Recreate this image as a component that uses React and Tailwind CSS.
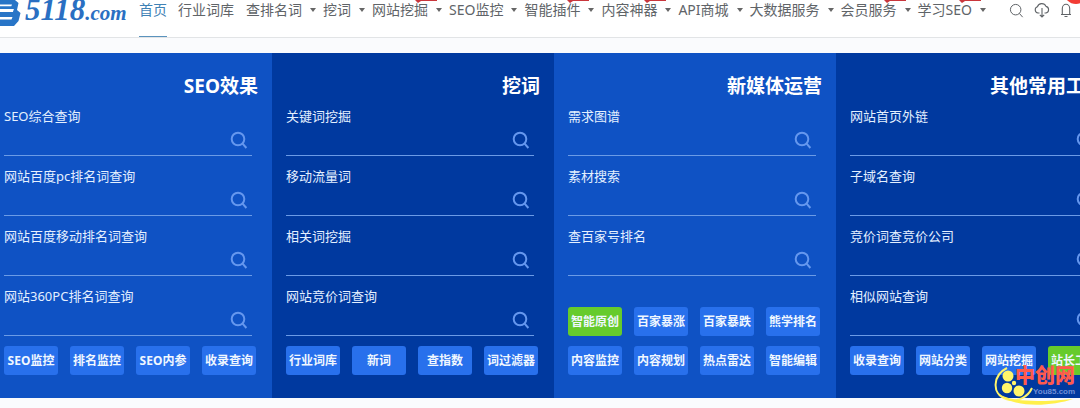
import React from "react";

const nav = [
  { text: "首页", active: true },
  { text: "行业词库" },
  { text: "查排名词", menu: true },
  { text: "挖词", menu: true },
  { text: "网站挖掘", menu: true, hot: true },
  { text: "SEO监控", menu: true },
  { text: "智能插件", menu: true, hot: true },
  { text: "内容神器", menu: true, hot: true },
  { text: "API商城", menu: true },
  { text: "大数据服务", menu: true },
  { text: "会员服务", menu: true, hot: true },
  { text: "学习SEO", menu: true, hot: true },
];

const columns = [
  {
    title: "SEO效果",
    fields: ["SEO综合查询", "网站百度pc排名词查询", "网站百度移动排名词查询", "网站360PC排名词查询"],
    links: ["SEO监控", "排名监控", "SEO内参", "收录查询"],
  },
  {
    title: "挖词",
    fields: ["关键词挖掘", "移动流量词", "相关词挖掘", "网站竞价词查询"],
    links: ["行业词库", "新词", "查指数", "词过滤器"],
  },
  {
    title: "新媒体运营",
    fields: ["需求图谱", "素材搜索", "查百家号排名"],
    links: ["智能原创", "百家暴涨", "百家暴跌", "熊学排名", "内容监控", "内容规划", "热点雷达", "智能编辑"],
    highlight: "智能原创",
  },
  {
    title: "其他常用工具",
    fields: ["网站首页外链", "子域名查询", "竞价词查竞价公司", "相似网站查询"],
    links: ["收录查询", "网站分类", "网站挖掘", "站长工具"],
    highlight: "站长工具",
  },
];

function SearchIcon({ className }) {
  return (
    <svg viewBox="0 0 18 18" fill="none" stroke="currentColor" className={className} aria-hidden="true">
      <circle cx="8" cy="8" r="6.3" />
      <path d="M12.4 12.4 16.4 17" />
    </svg>
  );
}

function Logo() {
  return (
    <a href="#" aria-label="5118.com" className="flex h-7 shrink-0 items-start text-[#2a6fc2]">
      <svg viewBox="0 0 21 28" className="h-7 w-[21px]" aria-hidden="true">
        <path d="M0 0H15L18.5 3 17 10 20.5 13 18.5 21 14 26H0V12H12.5L14 9H0Z" fill="#2875c7" />
        <path d="M0 4.5H12L11.3 6.2H0ZM0 10.4H13.5L12.8 12H0ZM0 17H12.5L11.5 19.4H0Z" fill="#fff" />
      </svg>
      <span className="flex items-baseline font-['Liberation_Serif',serif] font-bold italic">
        <span className="pl-1 text-[31px] leading-5">5118</span>
        <span className="text-[21px] leading-5">.com</span>
      </span>
    </a>
  );
}

function NavItem({ item }) {
  return (
    <li className="relative">
      <a
        href="#"
        className={
          item.active
            ? "mr-[11px] block h-[38px] border-b-2 border-[#5a93bd] text-[#3f82b5]"
            : item.menu
              ? "flex h-[38px] items-start gap-2 pr-[7px]"
              : "mr-3 block h-[38px]"
        }
      >
        {item.text}
        {item.menu && (
          <svg viewBox="0 0 6 4" className="mt-2 h-1 w-1.5" aria-hidden="true">
            <path d="M0 0H6L3 4Z" fill="#666" />
          </svg>
        )}
      </a>
      {item.hot && (
        <svg viewBox="0 0 22 3" className="absolute top-0 right-3 h-[3px] w-[22px]" aria-hidden="true">
          <path d="M0 0H22V1H6L3 3Z" fill="#c9363c" />
        </svg>
      )}
    </li>
  );
}

function Field({ label, id }) {
  return (
    <div>
      <label htmlFor={id} className="block text-[13px] leading-[18px] text-[#e4f0ff]">{label}</label>
      <div className="flex h-[31px] items-center border-b border-[#6b9be6] pr-1">
        <input id={id} type="text" className="h-6 min-w-0 flex-1 bg-transparent text-[13px] text-white outline-none" />
        <button type="button" aria-label={label} className="text-[#6597ee]">
          <SearchIcon className="size-[18px] stroke-2" />
        </button>
      </div>
    </div>
  );
}

function Column({ column, index }) {
  return (
    <section
      className={
        (index % 2 ? "bg-[#00399f]" : "bg-[#0f52c4]") + " flex flex-col px-3.5 pt-[21px] pb-[23px]"
      }
    >
      <h2 className="text-right text-[19px] leading-6 font-bold whitespace-nowrap text-white">{column.title}</h2>
      <div className="mt-[9px] mr-1.5 flex flex-col gap-[11px]">
        {column.fields.map((label, i) => (
          <Field key={label} label={label} id={"field-" + index + "-" + i} />
        ))}
      </div>
      <div className="mt-auto mr-0.5 grid grid-cols-4 gap-x-3 gap-y-2.5 pt-2.5">
        {column.links.map((text) => (
          <button
            key={text}
            type="button"
            className={
              (text === column.highlight ? "bg-[#66cb2c]" : "bg-[#2870ec]") +
              " h-[29px] rounded-[3px] text-center text-xs font-bold whitespace-nowrap text-[#f0f7ff]"
            }
          >
            {text}
          </button>
        ))}
      </div>
    </section>
  );
}

function Watermark() {
  return (
    <div className="absolute right-0 bottom-0 h-[48px] w-[86px]">
      <svg viewBox="0 0 86 48" className="absolute inset-0" aria-hidden="true">
        <path d="M13 8C-1 15-3 34 12 39C23 43 34 37 38 28" fill="none" stroke="#fff56a" strokeWidth="2" />
        <path d="M4 33C17 43 48 42 79 39C56 47 17 48 4 33Z" fill="#fff04a" />
        <g fill="#fff56a">
          <circle cx="14" cy="16" r="5.5" />
          <circle cx="13" cy="28" r="5.2" />
          <circle cx="25" cy="31" r="5.5" />
          <circle cx="20" cy="23" r="2.2" />
        </g>
      </svg>
      <div className="relative flex flex-col pt-1.5 pl-[21px]">
        <span className="text-[20px] leading-5 font-black text-[#ff5a4d]">中创网</span>
        <span className="pl-[18px] font-['Liberation_Sans',sans-serif] text-[8px] leading-3 font-bold text-[#6f8fd8]">You85.com</span>
      </div>
    </div>
  );
}

export default function App() {
  return (
    <div className="relative overflow-hidden bg-[#fafbfd] pb-2.5 font-['Noto_Sans','Noto_Sans_CJK_SC',sans-serif]">
      <header className="relative flex h-[38px] items-start overflow-hidden border-b border-[#e2e4e6] bg-white text-[#606468]">
        <Logo />
        <nav className="ml-auto shrink-0">
          <ul className="flex text-sm leading-5 whitespace-nowrap">
            {nav.map((item) => <NavItem key={item.text} item={item} />)}
          </ul>
        </nav>
        <div className="ml-4 flex shrink-0 items-center gap-2.5 pt-0.5 pr-2">
          <button type="button" aria-label="搜索"><SearchIcon className="size-[15px] stroke-[1.2]" /></button>
          <button type="button" aria-label="下载">
            <svg viewBox="0 0 16 16" fill="none" stroke="currentColor" strokeWidth="1.1" className="size-4" aria-hidden="true">
              <path d="M5.5 11H4A3.2 3.2 0 0 1 3.4 4.8A4.6 4.6 0 0 1 12 4.4A3.4 3.4 0 0 1 12 11H10.5M8 6V15M5.8 12.8 8 15 10.2 12.8" />
            </svg>
          </button>
          <button type="button" aria-label="通知">
            <svg viewBox="0 0 12 16" fill="none" stroke="currentColor" strokeWidth="1.1" className="h-4 w-3" aria-hidden="true">
              <path d="M1 12.5H11M2.3 12.5V6.5A3.7 4.2 0 0 1 9.7 6.5V12.5M4.5 14.5H7.5" />
            </svg>
          </button>
        </div>
        <span className="absolute -top-5 -right-2 size-6 rounded-full bg-[#f23c35]" />
      </header>
      <main className="mt-[15px] -mr-[38px] -ml-2.5 grid grid-cols-4">
        {columns.map((column, i) => <Column key={column.title} column={column} index={i} />)}
      </main>
      <Watermark />
    </div>
  );
}
